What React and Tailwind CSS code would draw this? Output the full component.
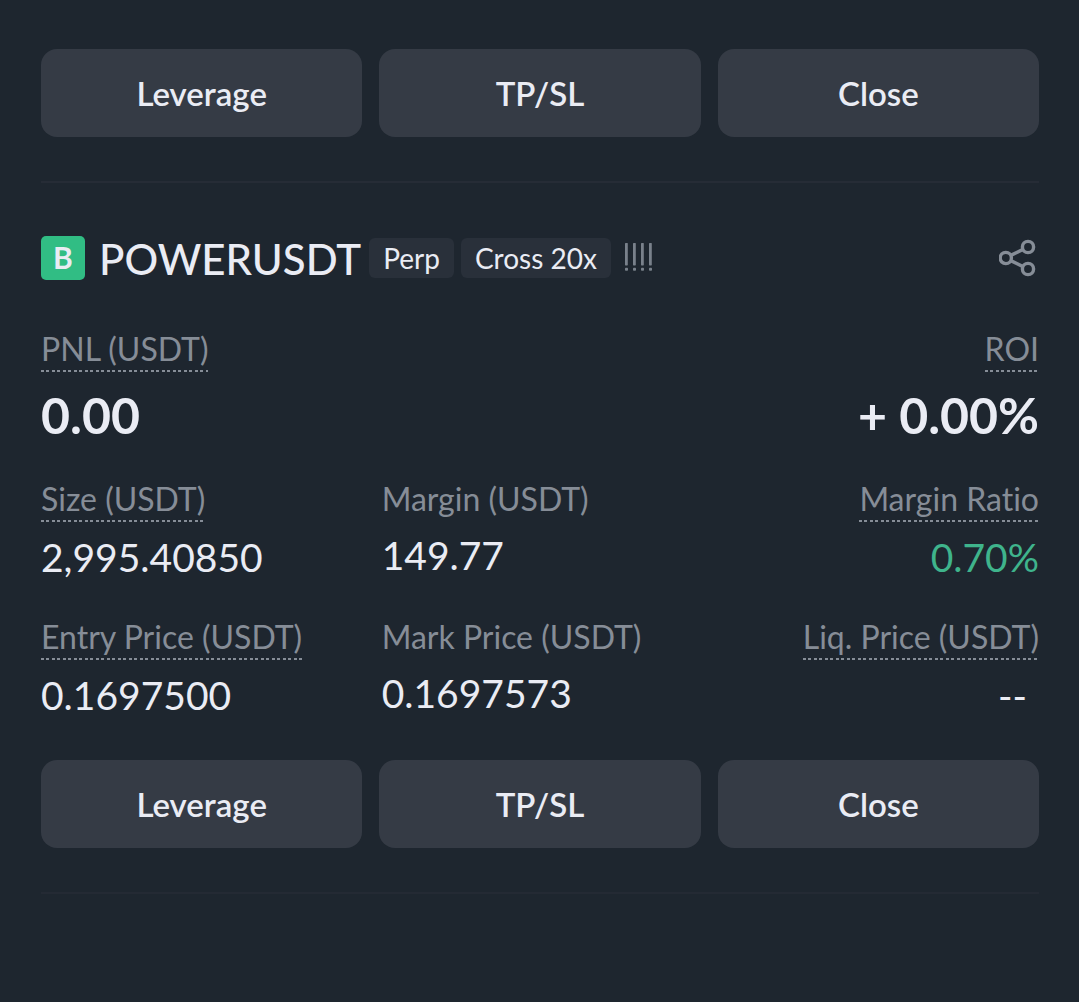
const position = {
  side: 'B',
  symbol: 'POWERUSDT',
  tags: ['Perp', 'Cross 20x'],
}

const summary = [
  { label: 'PNL (USDT)', value: '0.00', hint: true },
  { label: 'ROI', value: '+ 0.00%', hint: true, end: true },
]

const details = [
  { label: 'Size (USDT)', value: '2,995.40850', hint: true },
  { label: 'Margin (USDT)', value: '149.77' },
  { label: 'Margin Ratio', value: '0.70%', hint: true, end: true, tone: 'text-[#3fb48c]' },
  { label: 'Entry Price (USDT)', value: '0.1697500', hint: true },
  { label: 'Mark Price (USDT)', value: '0.1697573' },
  { label: 'Liq. Price (USDT)', value: '--', hint: true, end: true, tone: 'pr-3 text-[#eaecf4]' },
]

const actions = ['Leverage', 'TP/SL', 'Close']

function RiskBars() {
  return (
    <svg className="ml-3 h-8 w-8 shrink-0" viewBox="0 0 32 32" fill="#79818b" aria-hidden="true">
      {[2, 10, 18, 26].map((x) => (
        <g key={x}>
          <rect x={x} y="1" width="2.8" height="22.4" rx="0.6" />
          <rect x={x} y="25.8" width="3" height="3" rx="0.8" />
        </g>
      ))}
    </svg>
  )
}

function ShareIcon() {
  return (
    <svg className="h-10 w-10" viewBox="0 0 40 40" fill="none" stroke="#868d97" strokeWidth="3.4" aria-hidden="true">
      <circle cx="6.8" cy="20" r="5.6" />
      <circle cx="29" cy="9" r="5.6" />
      <circle cx="29" cy="31" r="5.6" />
      <path d="M11.8 17.4 24 11.4M11.8 22.6 24 28.6" />
    </svg>
  )
}

function ActionRow() {
  return (
    <div className="grid grid-cols-3 gap-[17px]">
      {actions.map((action) => (
        <button
          key={action}
          type="button"
          className="h-[88px] rounded-2xl bg-[#353b45] pt-0.5 text-[33px] font-semibold text-[#eaecf4]"
        >
          {action}
        </button>
      ))}
    </div>
  )
}

function Stat({ label, value, hint, end, tone = 'text-[#eaecf4]', large }) {
  return (
    <div className={end ? 'flex flex-col items-end' : 'flex flex-col items-start'}>
      <dt className="text-[32px] leading-[34px] whitespace-nowrap text-[#868d97]">
        <span className="block pb-1">{label}</span>
        {hint ? (
          <span className="block h-[2px] bg-[repeating-linear-gradient(90deg,#868d97_0_3px,transparent_3px_5px,#868d97_5px_8px,transparent_8px_11px)]" />
        ) : null}
      </dt>
      <dd
        className={`whitespace-nowrap ${tone} ${
          large ? 'mt-4 pb-0.5 text-[50px] leading-[54px] font-bold' : 'mt-3 pb-0.5 text-[39px] leading-[46px]'
        }`}
      >
        {value}
      </dd>
    </div>
  )
}

export default function App() {
  return (
    <main className="min-h-screen bg-[#1e262f] pt-[49px] pr-10 pb-12 pl-[41px] font-[Lato,sans-serif] text-[#eaecf4] [font-variant-ligatures:none]">
      <ActionRow />
      <hr className="mt-11 border-t-2 border-[#262c36]" />

      <article>
        <header className="mt-[53px] flex h-11 items-center">
          <span className="flex h-11 w-11 items-center justify-center rounded-[5px] bg-[#31bd84] pb-0.5 text-[30px] font-bold">
            {position.side}
          </span>
          <h2 className="ml-[14px] pt-0.5 text-[42px] font-medium">{position.symbol}</h2>
          <ul className="ml-2 flex gap-[7px]">
            {position.tags.map((tag) => (
              <li key={tag} className="rounded-md bg-[#29303a] px-[14px] text-[28px] leading-10 whitespace-nowrap">
                {tag}
              </li>
            ))}
          </ul>
          <RiskBars />
          <button type="button" aria-label="Share" className="ml-auto">
            <ShareIcon />
          </button>
        </header>

        <dl className="mt-[52px] flex justify-between">
          {summary.map((item) => (
            <Stat key={item.label} {...item} large />
          ))}
        </dl>
        <dl className="mt-[38px] mb-10 grid grid-cols-3 gap-x-6 gap-y-[38px]">
          {details.map((item) => (
            <Stat key={item.label} {...item} />
          ))}
        </dl>
        <ActionRow />
      </article>
      <hr className="mt-11 border-t-2 border-[#242a34]" />
    </main>
  )
}
